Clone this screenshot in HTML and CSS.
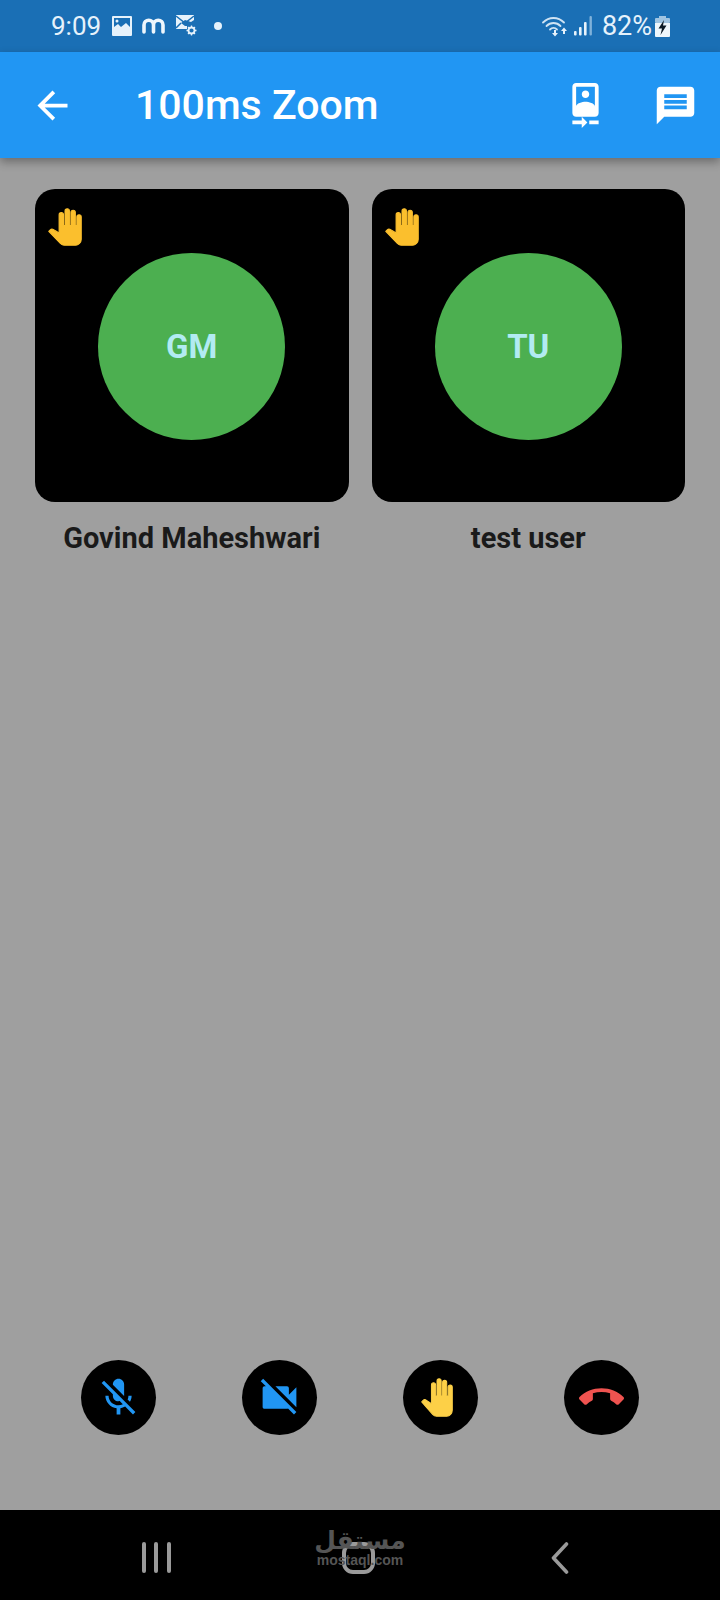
FILE: index.html
```html
<!DOCTYPE html>
<html lang="en">
<head>
<meta charset="utf-8">
<title>100ms Zoom</title>
<link rel="stylesheet" href="styles.css">
</head>
<body>
<div class="screen">
  <div class="status-bar">
    <span class="clock">9:09</span>
    <svg class="st-image" viewBox="0 0 20 20"><path fill="#e6f2fb" fill-rule="evenodd" d="M1 0h18a1 1 0 0 1 1 1v18a1 1 0 0 1-1 1H1a1 1 0 0 1-1-1V1a1 1 0 0 1 1-1zM2 2v9l4-3 3 3 5-4 4 4V2zM5 3.5a1.5 1.5 0 1 1 0 3 1.5 1.5 0 0 1 0-3z"/></svg>
    <svg class="st-m" viewBox="0 0 23 16"><path fill="none" stroke="#eef6fc" stroke-width="3.6" stroke-linecap="round" d="M2 14V7a4.5 4.5 0 0 1 9.500 0v7M11.500 7a4.500 4.500 0 0 1 9.500 0v7"/></svg>
    <svg class="st-mail" viewBox="0 0 22 22"><path fill="#e6f2fb" d="M1 1h18v5l-3 2-6-2-4 3 4 3h2v3H1z"/><path fill="none" stroke="#1a6fb5" stroke-width="1.500" d="M1 2l9 7 9-7M1 14l5-5"/><circle cx="16.500" cy="16.500" r="3" fill="none" stroke="#e6f2fb" stroke-width="1.800"/><path stroke="#e6f2fb" stroke-width="1.300" d="M16.500 11.500v2M16.500 19.500v2M11.500 16.500h2M19.500 16.500h2M13 13l1.400 1.400M18.600 18.600l1.400 1.400M20 13l-1.400 1.400M14.400 18.600L13 20"/></svg>
    <span class="st-dot"></span>
    <div class="status-right">
      <svg class="st-wifi" viewBox="0 0 28 21"><g fill="none" stroke="#cfe3f3" stroke-width="1.800" stroke-linecap="round"><path d="M1 6.500c6-6 15-6 21 0"/><path d="M4.500 10c4-4 10-4 14 0"/><path d="M8 13.500c2-2 5-2 7 0"/></g><path fill="#e6f2fb" d="M12 14h2v3h2l-3 3.500L10 17h2zM21 18v-3h-2l3-3.500 3 3.500h-2v3z"/></svg>
      <svg class="st-signal" viewBox="0 0 19 20"><g fill="#e6f2fb"><rect x="0" y="15" width="2.600" height="4.500" rx="1"/><rect x="5" y="11" width="2.600" height="8.500" rx="1"/><rect x="10" y="6" width="2.600" height="13.500" rx="1"/></g><rect x="15.500" y="0" width="2.400" height="19.500" rx="1" fill="#7fb2da"/></svg>
      <span class="pct">82%</span>
      <svg class="st-batt" viewBox="0 0 15 21"><rect x="4" y="0" width="7" height="3" fill="#9fc4e2"/><rect x="0" y="2" width="15" height="5" rx="1" fill="#9fc4e2"/><path fill="#eef6fc" d="M0 7h15v13a1 1 0 0 1-1 1H1a1 1 0 0 1-1-1z"/><path fill="#0c1a26" d="M9 4L3.500 12.500H7L5.500 19 11.500 9.500H8z"/></svg>
    </div>
  </div>

  <header class="app-bar">
    <svg class="icon" viewBox="0 0 24 24"><path fill="#fff" d="M20 11H7.830l5.590-5.590L12 4l-8 8 8 8 1.410-1.410L7.830 13H20v-2z"/></svg>
    <h1 class="title">100ms Zoom</h1>
    <div class="actions">
      <svg class="icon" viewBox="0 0 24 24"><path fill="#fff" d="M10 20H5v2h5v2l3-3-3-3v2zm4 0v2h5v-2h-5zM12 8c1.100 0 2-.9 2-2s-.9-2-2-2-1.990.9-1.990 2S10.900 8 12 8zm5-8H7C5.900 0 5 .9 5 2v14c0 1.100.9 2 2 2h10c1.100 0 2-.9 2-2V2c0-1.100-.9-2-2-2zM7 2h10v10.500c0-1.670-3.330-2.500-5-2.500s-5 .83-5 2.500V2z"/></svg>
      <svg class="icon" viewBox="0 0 24 24"><path fill="#fff" d="M20 2H4c-1.100 0-1.990.9-1.990 2L2 22l4-4h14c1.100 0 2-.9 2-2V4c0-1.100-.9-2-2-2zm-2 12H6v-2h12v2zm0-3H6V9h12v2zm0-3H6V6h12v2z"/></svg>
    </div>
  </header>

  <main class="content">
    <section class="grid">
      <figure class="peer">
        <div class="tile">
          <svg class="tile-hand" viewBox="0.500 -0.500 23 25" preserveAspectRatio="none"><path class="hand-shape" fill="#fbbf2d" stroke="#fbbf2d" d="M23 5.500V20c0 2.200-1.800 4-4 4h-7.300c-1.080 0-2.100-.43-2.850-1.190L1 14.830s1.260-1.230 1.300-1.250c.22-.19.490-.29.790-.29.220 0 .42.060.6.160.04.010 4.310 2.460 4.310 2.460V4c0-.83.670-1.500 1.500-1.500S11 3.170 11 4v7h1V1.500c0-.83.670-1.500 1.500-1.500S15 .67 15 1.500V11h1V2.500c0-.83.670-1.500 1.500-1.500s1.500.67 1.500 1.500V11h1V5.500c0-.83.670-1.500 1.500-1.500s1.500.67 1.500 1.500z"/></svg>
          <div class="avatar">GM</div>
        </div>
        <figcaption class="name">Govind Maheshwari</figcaption>
      </figure>
      <figure class="peer">
        <div class="tile">
          <svg class="tile-hand" viewBox="0.500 -0.500 23 25" preserveAspectRatio="none"><path class="hand-shape" fill="#fbbf2d" stroke="#fbbf2d" d="M23 5.500V20c0 2.200-1.800 4-4 4h-7.300c-1.080 0-2.100-.43-2.850-1.190L1 14.830s1.260-1.230 1.300-1.250c.22-.19.490-.29.790-.29.220 0 .42.060.6.160.04.010 4.310 2.460 4.310 2.460V4c0-.83.670-1.500 1.500-1.500S11 3.170 11 4v7h1V1.500c0-.83.670-1.500 1.500-1.500S15 .67 15 1.500V11h1V2.500c0-.83.670-1.500 1.500-1.500s1.500.67 1.500 1.500V11h1V5.500c0-.83.670-1.500 1.500-1.500s1.500.67 1.500 1.500z"/></svg>
          <div class="avatar">TU</div>
        </div>
        <figcaption class="name">test user</figcaption>
      </figure>
    </section>

    <div class="controls">
      <div class="ctl"><svg class="icon" viewBox="0 0 24 24"><path fill="#2196f3" d="M19 11h-1.700c0 .74-.16 1.430-.43 2.050l1.230 1.230c.56-.98.9-2.090.9-3.280zm-4.020.17c0-.06.020-.11.020-.17V5c0-1.660-1.340-3-3-3S9 3.340 9 5v.18l5.980 5.990zM4.270 3L3 4.270l6.010 6.010V11c0 1.660 1.330 3 2.990 3 .22 0 .44-.03.65-.08l1.660 1.660c-.71.33-1.500.52-2.310.52-2.760 0-5.300-2.100-5.300-5.100H5c0 3.410 2.720 6.230 6 6.720V21h2v-3.280c.91-.13 1.770-.45 2.540-.9L19.730 21 21 19.730 4.270 3z"/></svg></div>
      <div class="ctl"><svg class="icon" viewBox="0 0 24 24"><path fill="#2196f3" d="M21 6.500l-4 4V7c0-.55-.45-1-1-1H9.820L21 17.180V6.500zM3.270 2L2 3.270 4.730 6H4c-.55 0-1 .45-1 1v10c0 .55.45 1 1 1h12c.21 0 .39-.08.54-.18L19.730 21 21 19.730 3.270 2z"/></svg></div>
      <div class="ctl"><svg class="ctl-hand" viewBox="0.500 -0.500 23 25" preserveAspectRatio="none"><path class="hand-shape" fill="#fdd047" stroke="#fdd047" d="M23 5.500V20c0 2.200-1.800 4-4 4h-7.300c-1.080 0-2.100-.43-2.850-1.190L1 14.830s1.260-1.230 1.300-1.250c.22-.19.490-.29.790-.29.220 0 .42.060.6.160.04.010 4.310 2.460 4.310 2.460V4c0-.83.670-1.500 1.500-1.500S11 3.170 11 4v7h1V1.500c0-.83.670-1.500 1.500-1.500S15 .67 15 1.500V11h1V2.500c0-.83.670-1.500 1.500-1.500s1.500.67 1.500 1.500V11h1V5.500c0-.83.670-1.500 1.500-1.500s1.500.67 1.500 1.500z"/></svg></div>
      <div class="ctl"><svg class="icon" viewBox="0 0 24 24"><path fill="#ef5350" d="M12 9c-1.600 0-3.150.25-4.600.72v3.100c0 .39-.23.74-.56.9-.98.490-1.870 1.120-2.660 1.850-.18.18-.43.28-.7.28-.28 0-.53-.11-.71-.29L.29 13.080c-.18-.17-.29-.42-.29-.7 0-.28.110-.53.29-.71C3.340 8.780 7.460 7 12 7s8.660 1.780 11.710 4.670c.18.18.29.43.29.71 0 .28-.11.53-.29.71l-2.480 2.480c-.18.18-.43.29-.71.29-.27 0-.52-.11-.7-.28-.79-.74-1.690-1.360-2.670-1.850-.33-.16-.56-.5-.56-.9v-3.100C15.150 9.250 13.600 9 12 9z"/></svg></div>
    </div>
  </main>

  <nav class="nav-bar">
    <div class="recents"><span class="bar"></span><span class="bar"></span><span class="bar"></span></div>
    <div class="home"></div>
    <svg class="back" viewBox="0 0 18 32"><path fill="none" stroke="#9a9a9a" stroke-width="3.600" stroke-linecap="round" stroke-linejoin="round" d="M15.500 2L2.500 16l13 14"/></svg>
    <div class="watermark">
      <span class="wm-ar" dir="rtl">مستقل</span>
      <span class="wm-en">mostaql.com</span>
    </div>
  </nav>
</div>
</body>
</html>
```

FILE: styles.css
```css
* { box-sizing: border-box; }

html, body {
  margin: 0;
  padding: 0;
}

body {
  width: 720px;
  height: 1600px;
  overflow: hidden;
  font-family: Roboto, "Liberation Sans", sans-serif;
}

.screen {
  width: 720px;
  height: 1600px;
  display: flex;
  flex-direction: column;
  background: #9f9f9f;
}

/* status bar */
.status-bar {
  height: 52px;
  flex: none;
  display: flex;
  align-items: center;
  padding: 0 50px 0 51px;
  background: #1a6fb5;
  color: #e6f2fb;
}

.clock {
  font-size: 26px;
  width: 61px;
}

.st-image { width: 20px; height: 20px; }
.st-m { width: 23px; height: 16px; margin-left: 10px; }
.st-mail { width: 22px; height: 22px; margin-left: 10px; margin-top: -2px; }

.st-dot {
  width: 8px;
  height: 8px;
  margin-left: 17px;
  border-radius: 50%;
  background: #e6f2fb;
}

.status-right {
  margin-left: auto;
  display: flex;
  align-items: center;
}

.st-wifi { width: 28px; height: 21px; }
.st-signal { width: 19px; height: 20px; margin-left: 4px; }
.pct { font-size: 27px; margin-left: 9px; }
.st-batt { width: 15px; height: 21px; margin-left: 3px; }

/* app bar */
.app-bar {
  height: 106px;
  flex: none;
  display: flex;
  align-items: center;
  padding: 0 22px 0 30px;
  background: #2196f3;
  box-shadow: 0 4px 9px rgba(0, 0, 0, 0.32);
  position: relative;
}

.icon {
  width: 45px;
  height: 45px;
  flex: none;
}

.title {
  margin: 0 0 0 60px;
  font-size: 41px;
  font-weight: 500;
  color: #fff;
}

.actions {
  margin-left: auto;
  display: flex;
  gap: 45px;
}

/* content */
.content {
  flex: 1;
  display: flex;
  flex-direction: column;
  justify-content: space-between;
  padding: 31px 35px 75px;
}

.grid {
  display: grid;
  grid-template-columns: 1fr 1fr;
  gap: 23px;
}

.peer { margin: 0; }

.tile {
  position: relative;
  height: 313px;
  display: flex;
  align-items: center;
  justify-content: center;
  padding-top: 2px;
  border-radius: 20px;
  background: #000;
}

.tile-hand {
  position: absolute;
  left: 13px;
  top: 19px;
  width: 34px;
  height: 38px;
}

.hand-shape { stroke-width: 0.7; stroke-linejoin: round; }

.avatar {
  width: 187px;
  height: 187px;
  display: flex;
  align-items: center;
  justify-content: center;
  border-radius: 50%;
  background: #4caf50;
  color: #b2ebf2;
  font-size: 33px;
  font-weight: 700;
}

.name {
  margin-top: 19px;
  text-align: center;
  font-size: 29px;
  line-height: 34px;
  font-weight: 700;
  color: #1a1a1a;
}

/* call controls */
.controls {
  display: flex;
  justify-content: space-between;
  padding: 0 46px;
}

.ctl {
  width: 75px;
  height: 75px;
  display: flex;
  align-items: center;
  justify-content: center;
  border-radius: 50%;
  background: #000;
}

.ctl-hand {
  width: 32px;
  height: 39px;
  margin-right: 8px;
}

/* system nav */
.nav-bar {
  position: relative;
  height: 90px;
  flex: none;
  display: grid;
  grid-template-columns: repeat(3, 202px);
  align-items: center;
  justify-items: center;
  padding: 5px 0 0 55px;
  background: #000;
}

.recents {
  display: flex;
  gap: 8.500px;
}

.bar {
  width: 4px;
  height: 31px;
  border-radius: 2px;
  background: #9a9a9a;
}

.home {
  width: 33px;
  height: 32px;
  border: 4px solid #9a9a9a;
  border-radius: 11px;
}

.back {
  width: 18px;
  height: 32px;
}

.watermark {
  position: absolute;
  left: 297px;
  top: 16px;
  width: 126px;
  display: flex;
  flex-direction: column;
  align-items: center;
  color: #555;
}

.wm-ar {
  font-family: "DejaVu Sans", sans-serif;
  font-size: 25px;
  font-weight: 700;
  line-height: 29px;
}

.wm-en {
  font-family: "Liberation Sans", sans-serif;
  font-size: 14px;
  font-weight: 700;
  line-height: 14px;
  margin-top: -2px;
}
```
